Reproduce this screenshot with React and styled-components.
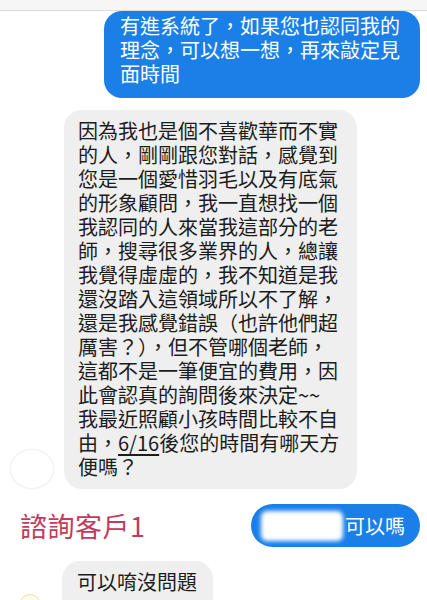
import React from 'react'
import styled, { createGlobalStyle } from 'styled-components'

const GlobalStyle = createGlobalStyle`
  html, body {
    margin: 0;
    padding: 0;
    background: #ffffff;
  }
  body {
    font-family: "Noto Sans CJK TC", "Noto Sans", sans-serif;
    color: #1c1c1c;
  }
`

const incoming = [
  '因為我也是個不喜歡華而不實',
  '的人，剛剛跟您對話，感覺到',
  '您是一個愛惜羽毛以及有底氣',
  '的形象顧問，我一直想找一個',
  '我認同的人來當我這部分的老',
  '師，搜尋很多業界的人，總讓',
  '我覺得虛虛的，我不知道是我',
  '還沒踏入這領域所以不了解，',
  '還是我感覺錯誤（也許他們超',
  '厲害？），但不管哪個老師，',
  '這都不是一筆便宜的費用，因',
  '此會認真的詢問後來決定~~',
  '我最近照顧小孩時間比較不自',
]

const App = () => {
  return (
    <Wrapper>
      <GlobalStyle />
      <TopStrip />
      <Row $align="right">
        <SentBubble>
          <Line>有進系統了，如果您也認同我的</Line>
          <Line>理念，可以想一想，再來敲定見</Line>
          <Line>面時間</Line>
        </SentBubble>
      </Row>
      <Row $gap={15}>
        <Avatar />
        <ReceivedBubble>
          {incoming.map((line, i) => (
            <Line key={i}>{line}</Line>
          ))}
          <Line>
            由，<u>6/16</u>後您的時間有哪天方
          </Line>
          <Line>便嗎？</Line>
        </ReceivedBubble>
      </Row>
      <LabelRow>
        <ClientLabel>諮詢客戶1</ClientLabel>
        <PillBubble>
          <Redacted />
          可以嗎
        </PillBubble>
      </LabelRow>
      <Row>
        <SmallAvatar />
        <ReceivedBubble $short>
          <Line>可以唷沒問題</Line>
        </ReceivedBubble>
      </Row>
    </Wrapper>
  )
}

const Wrapper = styled.div`
  position: relative;
  width: 427px;
  height: 600px;
  overflow: hidden;
  background: #fff;
  display: flex;
  flex-direction: column;
`

const TopStrip = styled.div`
  height: 10px;
  background: #f6f6f6;
  border-bottom: 1px solid #dcdcdc;
  flex-shrink: 0;
`

const Row = styled.div`
  display: flex;
  align-items: flex-end;
  justify-content: ${(p) => (p.$align === 'right' ? 'flex-end' : 'flex-start')};
  padding: 0 7px 0 10px;
  margin-bottom: ${(p) => (p.$gap ? `${p.$gap}px` : '0')};
`

const Line = styled.div`
  white-space: pre;
  u {
    text-underline-offset: 3px;
    text-decoration-thickness: 1.5px;
  }
`

const SentBubble = styled.div`
  width: 316px;
  box-sizing: border-box;
  background: #1b7fe8;
  color: #fff;
  font-size: 20px;
  line-height: 24px;
  padding: 3px 12px 12px 16px;
  border-radius: 18px;
  margin-bottom: 12px;
`

const ReceivedBubble = styled.div`
  width: ${(p) => (p.$short ? 'auto' : '293px')};
  box-sizing: border-box;
  background: #efefef;
  color: #1c1c1c;
  font-size: 20px;
  line-height: 24px;
  padding: ${(p) => (p.$short ? '9px 16px 20px 15px' : '9px 14px 10px 14px')};
  border-radius: 18px;
  margin-left: ${(p) => (p.$short ? '52px' : '10px')};
  margin-bottom: ${(p) => (p.$short ? '-20px' : '0')};
`

const Avatar = styled.div`
  width: 42px;
  height: 38px;
  border-radius: 50%;
  border: 1px solid #f0f0f0;
  box-shadow: 0 0 3px rgba(0, 0, 0, 0.04);
  flex-shrink: 0;
`

const SmallAvatar = styled.div`
  position: absolute;
  left: 19px;
  top: 594px;
  width: 20px;
  height: 20px;
  border-radius: 50%;
  border: 1px solid #efe2a8;
  background: #fffbe8;
`

const LabelRow = styled.div`
  display: flex;
  align-items: center;
  justify-content: space-between;
  padding: 0 7px 0 20px;
  margin-bottom: 14px;
`

const ClientLabel = styled.span`
  color: #c23a5d;
  font-size: 27px;
  line-height: 32px;
  letter-spacing: 0.5px;
  font-family: "Noto Sans CJK TC", "Liberation Sans", sans-serif;
`

const PillBubble = styled.div`
  display: flex;
  align-items: center;
  height: 43px;
  box-sizing: border-box;
  padding: 0 15px 0 10px;
  border-radius: 22px;
  background: #1b7fe8;
  color: #fff;
  font-size: 20px;
`

const Redacted = styled.span`
  display: inline-block;
  width: 82px;
  height: 30px;
  margin-right: 2px;
  background: #fff;
  border-radius: 6px;
  filter: blur(2px);
`

export default App
